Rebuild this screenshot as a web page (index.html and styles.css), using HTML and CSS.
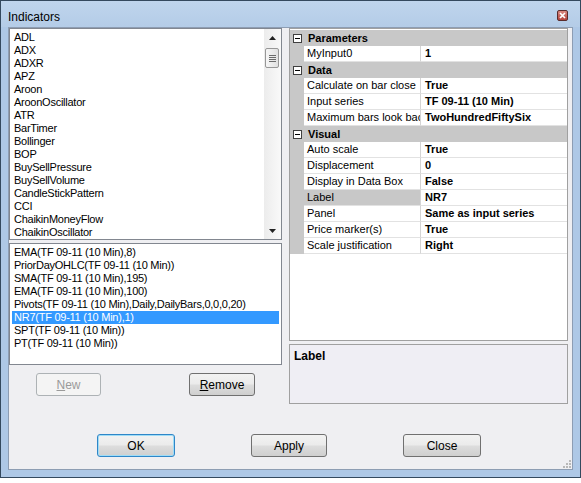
FILE: index.html
```html
<!DOCTYPE html>
<html>
<head>
<meta charset="utf-8">
<title>Indicators</title>
<link rel="stylesheet" href="styles.css">
</head>
<body>
<div class="window">
  <div class="titlebar">
    <span class="title">Indicators</span>
    <span class="close"><svg width="7" height="7" viewBox="0 0 7 7"><path d="M1 1L6 6M6 1L1 6" stroke="#fff" stroke-width="1.7"/></svg></span>
  </div>
  <div class="client">
    <div class="panes">
      <div class="left">
        <div class="list list-top">
          <ul class="items">
            <li>ADL</li><li>ADX</li><li>ADXR</li><li>APZ</li><li>Aroon</li><li>AroonOscillator</li><li>ATR</li><li>BarTimer</li><li>Bollinger</li><li>BOP</li><li>BuySellPressure</li><li>BuySellVolume</li><li>CandleStickPattern</li><li>CCI</li><li>ChaikinMoneyFlow</li><li>ChaikinOscillator</li>
          </ul>
          <div class="vscroll">
            <div class="arrow"><svg width="7" height="4" viewBox="0 0 7 4"><path d="M3.5 0L7 4H0Z" fill="#222"/></svg></div>
            <div class="thumb"><span></span><span></span><span></span><span></span></div>
            <div class="track"></div>
            <div class="arrow"><svg width="7" height="4" viewBox="0 0 7 4"><path d="M0 0H7L3.5 4Z" fill="#222"/></svg></div>
          </div>
        </div>
        <ul class="list list-bottom items">
          <li>EMA(TF 09-11 (10 Min),8)</li>
          <li>PriorDayOHLC(TF 09-11 (10 Min))</li>
          <li>SMA(TF 09-11 (10 Min),195)</li>
          <li>EMA(TF 09-11 (10 Min),100)</li>
          <li>Pivots(TF 09-11 (10 Min),Daily,DailyBars,0,0,0,20)</li>
          <li class="sel">NR7(TF 09-11 (10 Min),1)</li>
          <li>SPT(TF 09-11 (10 Min))</li>
          <li>PT(TF 09-11 (10 Min))</li>
        </ul>
        <div class="lbtns">
          <div class="btn disabled new"><u>N</u>ew</div>
          <div class="btn remove"><u>R</u>emove</div>
        </div>
      </div>
      <div class="right">
        <div class="grid">
          <div class="cat"><span class="box"></span><b>Parameters</b></div>
          <div class="row"><span class="gut"></span><span class="name">MyInput0</span><span class="val">1</span></div>
          <div class="cat"><span class="box"></span><b>Data</b></div>
          <div class="row"><span class="gut"></span><span class="name">Calculate on bar close</span><span class="val">True</span></div>
          <div class="row"><span class="gut"></span><span class="name">Input series</span><span class="val">TF 09-11 (10 Min)</span></div>
          <div class="row"><span class="gut"></span><span class="name">Maximum bars look back</span><span class="val">TwoHundredFiftySix</span></div>
          <div class="cat"><span class="box"></span><b>Visual</b></div>
          <div class="row"><span class="gut"></span><span class="name">Auto scale</span><span class="val">True</span></div>
          <div class="row"><span class="gut"></span><span class="name">Displacement</span><span class="val">0</span></div>
          <div class="row"><span class="gut"></span><span class="name">Display in Data Box</span><span class="val">False</span></div>
          <div class="row selrow"><span class="gut"></span><span class="name">Label</span><span class="val">NR7</span></div>
          <div class="row"><span class="gut"></span><span class="name">Panel</span><span class="val">Same as input series</span></div>
          <div class="row"><span class="gut"></span><span class="name">Price marker(s)</span><span class="val">True</span></div>
          <div class="row"><span class="gut"></span><span class="name">Scale justification</span><span class="val">Right</span></div>
        </div>
        <div class="help"><b>Label</b></div>
      </div>
    </div>
    <div class="bbtns">
      <div class="btn big ok">OK</div>
      <div class="btn big">Apply</div>
      <div class="btn big">Close</div>
    </div>
    <div class="grip"><svg width="9" height="9" viewBox="0 0 9 9"><g fill="#b8b8b8"><rect x="7" y="1" width="2" height="2"/><rect x="4" y="4" width="2" height="2"/><rect x="7" y="4" width="2" height="2"/><rect x="1" y="7" width="2" height="2"/><rect x="4" y="7" width="2" height="2"/><rect x="7" y="7" width="2" height="2"/></g></svg></div>
  </div>
</div>
</body>
</html>
```
FILE: styles.css
```css
body {
  margin: 0;
  background: #ffffff;
  font-family: "Liberation Sans", Arial, sans-serif;
  font-size: 11px;
  color: #000;
}

.window {
  width: 581px;
  height: 478px;
  box-sizing: border-box;
  border: 1px solid #34495e;
  background: #aec8e6;
  display: flex;
  flex-direction: column;
}

.titlebar {
  height: 26px;
  flex: none;
  display: flex;
  align-items: flex-start;
  justify-content: space-between;
  padding: 0 12px 0 7px;
  background: linear-gradient(#bfd5ed, #b4cce7);
}

.title {
  font-size: 12px;
  line-height: 14px;
  margin-top: 9px;
  color: #000;
}

.close {
  margin-top: 9px;
  width: 11px;
  height: 11px;
  box-sizing: border-box;
  border: 1px solid #5a2c2c;
  border-radius: 2px;
  background: linear-gradient(#d98880, #b5443c);
  display: flex;
  align-items: center;
  justify-content: center;
}

.close svg { display: block; }

.client {
  flex: 1;
  margin: 0 7px 7px;
  border: 1px solid #8d9db3;
  background: #efeff2;
  position: relative;
  display: flex;
  flex-direction: column;
}

.panes {
  display: flex;
  gap: 7px;
}

.left {
  width: 273px;
  display: flex;
  flex-direction: column;
}

.right {
  width: 279px;
  display: flex;
  flex-direction: column;
}

.list {
  box-sizing: border-box;
  border: 1px solid #828790;
  background: #fff;
  overflow: hidden;
}

.items {
  list-style: none;
  margin: 0;
  padding: 2px 2px 0;
}

.items li {
  height: 13px;
  line-height: 13px;
  padding-left: 2px;
  white-space: nowrap;
  letter-spacing: -0.25px;
}

.items li.sel {
  background: #3399ff;
  color: #fff;
}

.list-top {
  height: 212px;
  display: flex;
}

.list-top .items {
  flex: 1;
}

.vscroll {
  width: 17px;
  display: flex;
  flex-direction: column;
  background: linear-gradient(90deg, #ececec, #f9f9f9);
}

.vscroll .arrow {
  height: 17px;
  display: flex;
  align-items: center;
  justify-content: center;
}

.vscroll .arrow svg { display: block; }

.thumb {
  margin: 2px 2px 0 1px;
  height: 20px;
  box-sizing: border-box;
  border: 1px solid #979797;
  border-radius: 2px;
  background: linear-gradient(90deg, #f6f6f6, #e1e1e1);
  display: flex;
  flex-direction: column;
  align-items: center;
  justify-content: center;
  gap: 1px;
}

.thumb span {
  width: 7px;
  height: 1px;
  background: #6b6b6b;
}

.vscroll .track { flex: 1; }

.list-bottom {
  margin-top: 3px;
  height: 122px;
}

.lbtns {
  margin-top: 8px;
  display: flex;
}

.btn {
  box-sizing: border-box;
  height: 23px;
  border: 1px solid #707070;
  border-radius: 3px;
  background: linear-gradient(#f2f2f2 0%, #ebebeb 48%, #dddddd 52%, #cfcfcf 100%);
  display: flex;
  align-items: center;
  justify-content: center;
  font-size: 12px;
  color: #000;
}

.btn.new {
  width: 65px;
  margin-left: 27px;
}

.btn.disabled {
  border-color: #adb2b5;
  background: #f4f4f4;
  color: #9a9a9a;
}

.btn.remove {
  width: 66px;
  margin-left: 88px;
}

.grid {
  box-sizing: border-box;
  height: 313px;
  border: 1px solid #a0a0a0;
  padding-top: 1px;
  background: #fff;
  overflow: hidden;
}

.cat {
  height: 16px;
  display: flex;
  align-items: center;
  background: #c8c8c8;
}

.cat b {
  margin-left: 6px;
  font-weight: bold;
}

.box {
  width: 9px;
  height: 9px;
  margin-left: 3px;
  box-sizing: border-box;
  border: 1px solid #404040;
  background: #fff;
  position: relative;
}

.box::after {
  content: "";
  position: absolute;
  left: 1px;
  top: 3px;
  width: 5px;
  height: 1px;
  background: #000;
}

.row {
  height: 16px;
  display: grid;
  grid-template-columns: 14px 117px 1fr;
}

.row .gut {
  background: #c8c8c8;
}

.row .name,
.row .val {
  box-sizing: border-box;
  line-height: 15px;
  border-bottom: 1px solid #e2e2e2;
  white-space: nowrap;
  overflow: hidden;
}

.row .name {
  padding-left: 3px;
  border-right: 1px solid #d4d4d4;
}

.row .val {
  padding-left: 4px;
  font-weight: bold;
}

.row.selrow .name {
  background: #c8c8c8;
}

.help {
  margin-top: 3px;
  height: 60px;
  box-sizing: border-box;
  border: 1px solid #a0a0a0;
  background: #efeef4;
  padding: 4px 4px;
  font-size: 12px;
  line-height: 14px;
}

.bbtns {
  margin-top: 30px;
  display: flex;
  padding-left: 88px;
  gap: 76px;
}

.btn.big {
  width: 78px;
}

.btn.big:nth-child(2) {
  width: 76px;
}

.btn.ok {
  border-color: #2f86c8;
  box-shadow: inset 0 0 0 1px #9fdcf6;
}

.grip {
  position: absolute;
  right: 1px;
  bottom: 1px;
  line-height: 0;
}
```
